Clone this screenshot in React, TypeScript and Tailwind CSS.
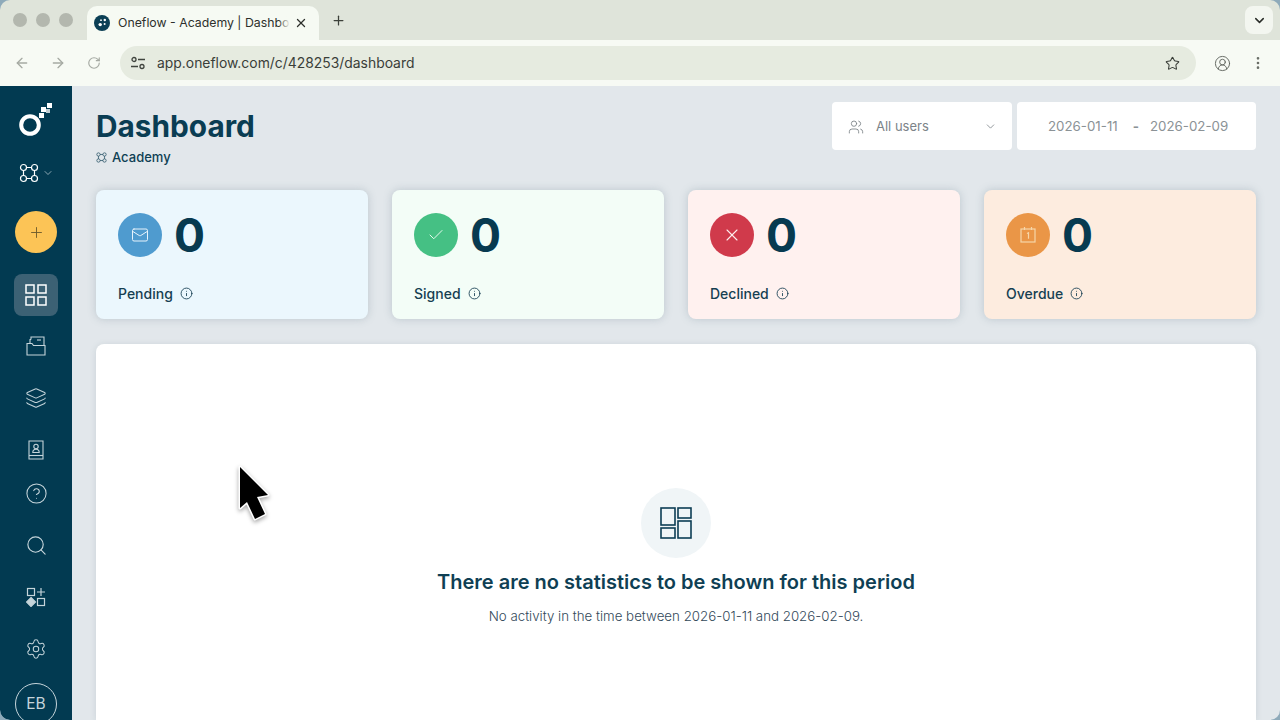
import { ArrowLeft, ArrowRight, Check, ChevronDown, CircleHelp, CircleUserRound, EllipsisVertical, Info, Layers, Mail, Plus, RotateCw, Search, Settings, Star, Users, X } from "lucide-react";
import type { ReactNode } from "react";

const OrgIcon = ({ size, stroke }: { size: number; stroke: number }) => (
  <svg width={size} height={size} viewBox="0 0 20 20" fill="none" stroke="currentColor" strokeWidth={stroke}>
    <circle cx="4.5" cy="4.5" r="3" />
    <circle cx="15.5" cy="4.5" r="3" />
    <circle cx="4.5" cy="15.5" r="3" />
    <circle cx="15.5" cy="15.5" r="3" />
    <path d="M7.5 4.5h5M7.5 15.5h5M4.5 7.5v5M15.5 7.5v5" />
  </svg>
);

const Logo = () => (
  <svg width="36" height="34" viewBox="0 0 36 34" fill="white">
    <circle cx="12" cy="22" r="8.8" fill="none" stroke="white" strokeWidth="4" />
    <rect x="29" y="0" width="5" height="5" />
    <rect x="23" y="4" width="5" height="5" />
    <rect x="28" y="6" width="4" height="4" opacity="0.75" />
    <rect x="21" y="10" width="5" height="5" />
  </svg>
);

const Favicon = () => (
  <svg width="16" height="16" viewBox="0 0 16 16" className="shrink-0">
    <circle cx="8" cy="8" r="8" fill="#0b3f55" />
    <circle cx="6.2" cy="9.6" r="1.7" fill="white" />
    <circle cx="10.8" cy="5" r="1.2" fill="white" />
    <circle cx="10.6" cy="9" r="1" fill="white" />
    <circle cx="7" cy="5.2" r="0.9" fill="white" />
  </svg>
);

const GridIcon = () => (
  <svg width="22" height="22" viewBox="0 0 22 22" fill="none" stroke="currentColor" strokeWidth="1.5">
    <rect x="1" y="1" width="8" height="8" />
    <rect x="13" y="1" width="8" height="8" />
    <rect x="1" y="13" width="8" height="8" />
    <rect x="13" y="13" width="8" height="8" />
  </svg>
);

const FolderIcon = () => (
  <svg width="20" height="20" viewBox="0 0 20 20" fill="none" stroke="currentColor" strokeWidth="1.1">
    <path d="M1 7.5h5l1.5 2H19V19H1z" />
    <path d="M4 7V3.5h1M5 3.5V1h13v8" />
    <path d="M11 4h4" />
  </svg>
);

const ContactIcon = () => (
  <svg width="18" height="20" viewBox="0 0 18 20" fill="none" stroke="currentColor" strokeWidth="1.1">
    <path d="M2 1h14v18H2z" />
    <path d="M2 15.5h14" />
    <circle cx="9" cy="6.5" r="2.2" />
    <path d="M5.8 12.5c0-2 1.4-3.2 3.2-3.2s3.2 1.2 3.2 3.2z" />
  </svg>
);

const AddonsIcon = () => (
  <svg width="20" height="20" viewBox="0 0 20 20" fill="none" stroke="currentColor" strokeWidth="1.2">
    <rect x="1.5" y="1.5" width="7" height="7" />
    <path d="M15 1v8M11 5h8" />
    <path d="M5 10.5 9.5 15 5 19.5.5 15z" fill="currentColor" />
    <rect x="11.5" y="11.5" width="7" height="7" />
  </svg>
);

const CalendarIcon = () => (
  <svg width="18" height="18" viewBox="0 0 18 18" fill="none" stroke="#f6d6a8" strokeWidth="1.2">
    <rect x="2" y="3" width="14" height="13" />
    <path d="M5.5 1v3M12.5 1v3" />
    <path d="M8 7.5 9.5 6.8v6" />
  </svg>
);

const EmptyIcon = () => (
  <svg width="32" height="32" viewBox="0 0 32 32" fill="none" stroke="#0d3e54" strokeWidth="1.6">
    <rect x="1" y="1" width="14" height="17" />
    <rect x="18" y="1" width="13" height="10" />
    <rect x="1" y="21" width="14" height="10" />
    <rect x="18" y="14" width="13" height="17" />
  </svg>
);

const railItem = "flex shrink-0 items-center justify-center text-[#c5d4da]";

const stats: { label: string; bg: string; circle: string; icon: ReactNode }[] = [
  { label: "Pending", bg: "bg-[#ebf7fd]", circle: "bg-[#4f9bcf]", icon: <Mail size={18} strokeWidth={1.3} className="text-[#eaf6fd]" /> },
  { label: "Signed", bg: "bg-[#f3fdf7]", circle: "bg-[#45c084]", icon: <Check size={18} strokeWidth={1.3} className="text-[#eafbf0]" /> },
  { label: "Declined", bg: "bg-[#fff1ef]", circle: "bg-[#d03a4b]", icon: <X size={20} strokeWidth={1.3} className="text-[#fdeeee]" /> },
  { label: "Overdue", bg: "bg-[#fdecdf]", circle: "bg-[#ea9647]", icon: <CalendarIcon /> },
];

export default function App() {
  return (
    <div className="h-[720px] w-[1280px] overflow-hidden bg-[#8eaaba] font-['Inter',sans-serif]">
      <div className="relative flex h-full flex-col overflow-hidden rounded-[10px]">
        {/* tab strip */}
        <div className="flex h-10 shrink-0 items-end bg-[#dfe4da] pl-[13px] pr-[7px]">
          <div className="mb-[13px] flex gap-[9px]">
            <span className="h-[14px] w-[14px] rounded-full bg-[#b3b7ae]" />
            <span className="h-[14px] w-[14px] rounded-full bg-[#b3b7ae]" />
            <span className="h-[14px] w-[14px] rounded-full bg-[#b3b7ae]" />
          </div>
          <div className="ml-[14px] flex h-[34px] w-[232px] items-center rounded-t-[10px] bg-[#f6faf3] pl-[7px]">
            <Favicon />
            <span className="relative ml-2 w-[172px] whitespace-nowrap text-[12.3px] text-[#2d302c] after:absolute after:inset-y-0 after:right-0 after:w-3 after:bg-gradient-to-r after:from-transparent after:to-[#f6faf3]">
              Oneflow - Academy | Dashbo
            </span>
            <X size={14} strokeWidth={2.2} className="ml-1 shrink-0 text-[#2d302c]" />
          </div>
          <Plus size={15} strokeWidth={2} className="mb-[12px] ml-[12px] text-[#3c403a]" />
          <div className="mb-[6px] ml-auto flex h-7 w-7 items-center justify-center rounded-lg bg-[#f3f6f0]">
            <ChevronDown size={15} strokeWidth={2.4} className="text-[#2a2d29]" />
          </div>
        </div>

        {/* toolbar */}
        <div className="flex h-[46px] shrink-0 items-center bg-[#f7faf4] pl-[14px] pr-[14px]">
          <ArrowLeft size={16} className="text-[#a6aaa3]" />
          <ArrowRight size={16} className="ml-[20px] text-[#a6aaa3]" />
          <RotateCw size={14} className="ml-[21px] text-[#a6aaa3]" />
          <div className="ml-[19px] flex h-[34px] w-[1076px] items-center rounded-full bg-[#e6ebe0] pl-[10px] pr-[16px]">
            <svg width="16" height="14" viewBox="0 0 16 14" fill="none" stroke="#40443e" strokeWidth="1.3">
              <circle cx="4" cy="3.5" r="2" />
              <path d="M8 3.5h7M1 10.5h7" />
              <circle cx="12" cy="10.5" r="2" />
            </svg>
            <span className="ml-[11px] text-[13.9px] text-[#3a3e39]">app.oneflow.com/c/428253/dashboard</span>
            <Star size={15} strokeWidth={1.7} className="ml-auto text-[#3a3e39]" />
          </div>
          <CircleUserRound size={17} strokeWidth={1.3} className="ml-[18px] text-[#5e625b]" />
          <EllipsisVertical size={16} className="ml-[19px] text-[#6a6e67]" />
        </div>

        {/* page */}
        <div className="flex min-h-0 flex-1">
          <aside className="flex w-[72px] shrink-0 flex-col items-center overflow-hidden rounded-bl-[10px] bg-[#023a51] text-[#c5d4da]">
            <div className="flex h-[68px] w-full shrink-0 items-center justify-center"><Logo /></div>
            <div className="flex h-[38px] w-full shrink-0 items-center justify-center gap-[3px] text-white">
              <OrgIcon size={20} stroke={1.2} />
              <ChevronDown size={12} strokeWidth={1.4} className="text-[#c5d4da]" />
            </div>
            <button className="mt-[19px] flex h-[42px] w-[42px] shrink-0 items-center justify-center rounded-full bg-[#fcc456] text-[#6d5a2c]">
              <Plus size={17} strokeWidth={1.3} />
            </button>
            <div className="mt-[21px] flex h-[42px] w-[44px] shrink-0 items-center justify-center rounded-lg bg-[#3c6174] text-white"><GridIcon /></div>
            <div className={`${railItem} mt-1 h-[52px] w-full`}><FolderIcon /></div>
            <div className={`${railItem} h-[52px] w-full`}><Layers size={22} strokeWidth={1.1} /></div>
            <div className={`${railItem} h-[52px] w-full`}><ContactIcon /></div>
            <div className={`${railItem} h-[34px] w-full`}><CircleHelp size={23} strokeWidth={1.1} /></div>
            <div className={`${railItem} mt-[9px] h-[52px] w-full`}><Search size={23} strokeWidth={1.2} /></div>
            <div className={`${railItem} h-[52px] w-full`}><AddonsIcon /></div>
            <div className={`${railItem} h-[52px] w-full`}><Settings size={22} strokeWidth={1.1} /></div>
            <div className="mt-2 flex h-[42px] w-[42px] shrink-0 items-center justify-center rounded-full border border-[#c5d4da] text-[15.5px] text-[#c5d4da]">EB</div>
          </aside>

          <main className="flex min-w-0 flex-1 flex-col overflow-hidden bg-[#e2e7eb] pl-6 pr-6 pt-4">
            <div className="flex h-[48px] shrink-0 items-start justify-between">
              <div>
                <h1 className="mt-[6px] text-[29.8px] leading-[36px] font-bold text-[#0a3d53]">Dashboard</h1>
                <div className="mt-[4px] flex items-center gap-[5px] text-[#0f3f54]">
                  <OrgIcon size={11} stroke={1.2} />
                  <span className="text-[13px] leading-[18px] font-medium">Academy</span>
                </div>
              </div>
              <div className="flex gap-[5px]">
                <div className="flex h-[48px] w-[180px] items-center rounded bg-white pl-4 pr-[15px] pt-[1px] text-[#7c8388]">
                  <Users size={16} strokeWidth={1.3} />
                  <span className="ml-3 text-[13px]">All users</span>
                  <ChevronDown size={13} strokeWidth={1.5} className="ml-auto" />
                </div>
                <div className="flex h-[48px] w-[239px] items-center rounded bg-white pl-[31px] pt-[1px] text-[13.3px] text-[#8b9296]">
                  <span>2026-01-11</span>
                  <span className="ml-[15px] font-bold">-</span>
                  <span className="ml-[11px]">2026-02-09</span>
                </div>
              </div>
            </div>

            <div className="mt-[40px] grid shrink-0 grid-cols-4 gap-6">
              {stats.map((stat) => (
                <div key={stat.label} className={`h-[129px] rounded-lg px-[22px] pt-[23px] shadow-[0_0_8px_rgba(90,115,130,0.28)] ${stat.bg}`}>
                  <div className="flex h-[44px] items-center">
                    <span className={`flex h-[44px] w-[44px] items-center justify-center rounded-full ${stat.circle}`}>{stat.icon}</span>
                    <span className="ml-[12px] text-[46px] leading-[44px] font-bold text-[#073a50]">0</span>
                  </div>
                  <div className="mt-[27px] flex h-[18px] items-center gap-[7px] text-[#163f52]">
                    <span className="text-[14px] font-medium">{stat.label}</span>
                    <Info size={13} strokeWidth={1.6} />
                  </div>
                </div>
              ))}
            </div>

            <section className="mt-[25px] flex min-h-0 flex-1 flex-col items-center rounded-t-lg bg-white pt-[144px] shadow-[0_1px_6px_rgba(90,115,130,0.18)]">
              <div className="flex h-[70px] w-[70px] shrink-0 items-center justify-center rounded-full bg-[#f0f5f7]"><EmptyIcon /></div>
              <h2 className="mt-[10px] text-[20px] leading-[28px] font-semibold text-[#0f3f54]">There are no statistics to be shown for this period</h2>
              <p className="mt-[10px] text-[13.3px] leading-5 font-light text-[#33495a]">No activity in the time between 2026-01-11 and 2026-02-09.</p>
            </section>
          </main>
        </div>

        {/* mouse pointer captured in the recording */}
        <svg className="absolute left-[230px] top-[455px] drop-shadow-[0_2px_2px_rgba(0,0,0,0.35)]" width="50" height="70" viewBox="0 0 50 70">
          <path d="M10 12 38 40 27 42 35 59 25 64 17 47 10 53z" fill="black" stroke="white" strokeWidth="3" strokeLinejoin="round" paintOrder="stroke" />
        </svg>
      </div>
    </div>
  );
}
